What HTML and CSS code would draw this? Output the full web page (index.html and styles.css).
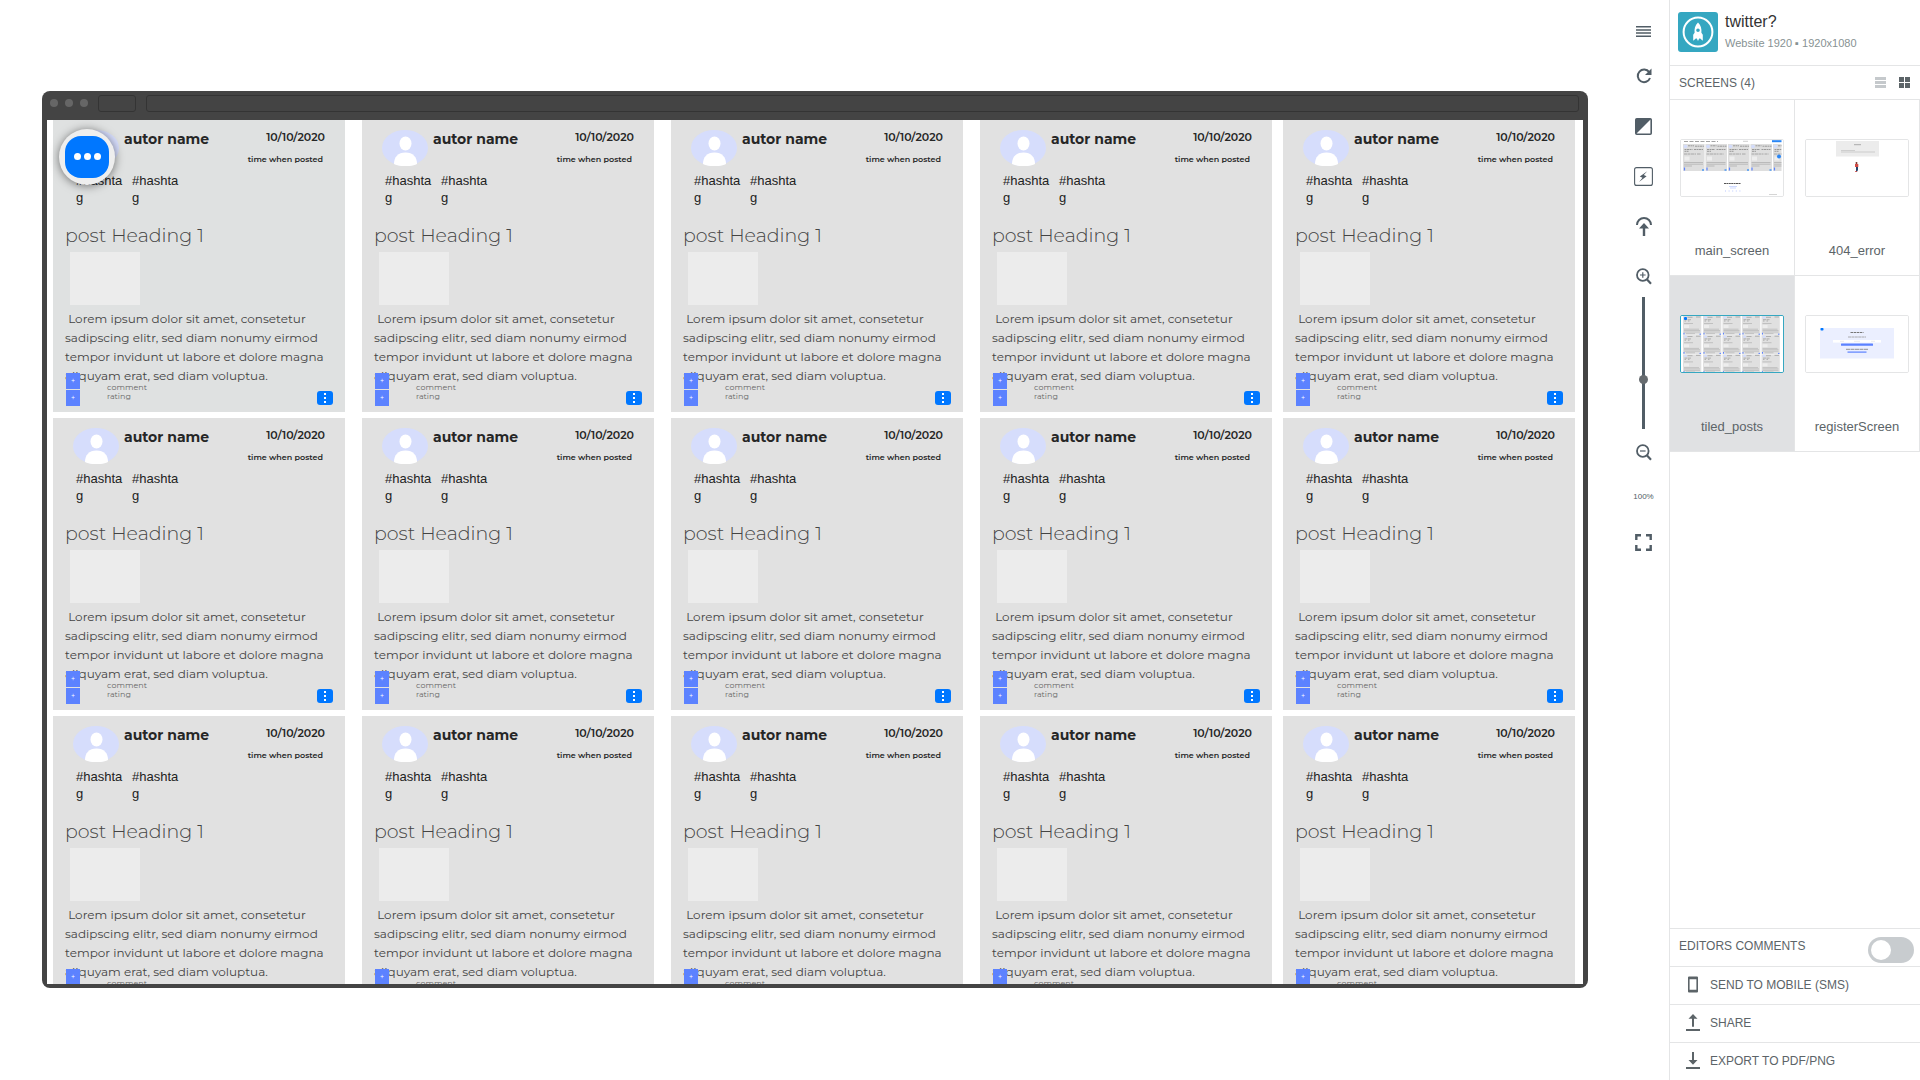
FILE: index.html
```html
<!DOCTYPE html>
<html lang="en">
<head>
<meta charset="utf-8">
<meta name="viewport" content="width=device-width, initial-scale=1">
<title>twitter? - tiled_posts</title>
<link rel="stylesheet" href="styles.css">
</head>
<body>
<div class="app">
  <main class="stage">
    <div class="browser">
      <div class="browser-bar">
        <span class="dot"></span><span class="dot"></span><span class="dot"></span>
        <span class="bar-box bar-nav"></span>
        <span class="bar-box bar-url"></span>
      </div>
      <div class="screen">
        <div class="posts" id="posts"></div>
        <button class="fab" type="button" aria-label="Menu">
          <span class="fab-face"><i></i><i></i><i></i></span>
        </button>
      </div>
    </div>
  </main>

  <nav class="tools" aria-label="Preview tools">
    <button class="tool tool-first" type="button" aria-label="Menu"><svg width="15" height="11" viewBox="0 0 15 11"><path d="M0 0h15v1.500H0zM0 3.200h15v1.500H0zM0 6.300h15v1.500H0zM0 9.500h15v1.500H0z" fill="currentColor"/></svg></button>
    <button class="tool" type="button" aria-label="Reload"><svg width="16" height="16" viewBox="0 0 16 16"><path d="M13.2 4.2A6.3 6.3 0 1 0 14 10" fill="none" stroke="currentColor" stroke-width="2"/><path d="M15.5 0.6v6.4H9z" fill="currentColor"/></svg></button>
    <button class="tool" type="button" aria-label="Contrast"><svg width="17" height="17" viewBox="0 0 17 17"><rect x="0.8" y="0.8" width="15.4" height="15.4" rx="1" fill="none" stroke="currentColor" stroke-width="1.6"/><path d="M1 16V1h15z" fill="currentColor"/></svg></button>
    <button class="tool" type="button" aria-label="Highlight links"><svg width="19" height="19" viewBox="0 0 19 19"><rect x="0.6" y="0.6" width="17.8" height="17.8" rx="2" fill="none" stroke="currentColor" stroke-width="1.1"/><path d="M13.200 4.200L5.800 9.500l2.700 1.200-3.500 4.200 7.600-5.600-2.800-1.200z" fill="currentColor"/></svg></button>
    <button class="tool" type="button" aria-label="Upload"><svg width="16" height="19" viewBox="0 0 16 19"><path d="M1 8A7 7 0 0 1 15 8" fill="none" stroke="currentColor" stroke-width="2"/><path d="M8 6l5 5.5H9.2V19H6.8v-7.5H3z" fill="currentColor"/></svg></button>
    <button class="tool" type="button" aria-label="Zoom in"><svg width="16" height="17" viewBox="0 0 16 17"><circle cx="6.8" cy="7" r="5.8" fill="none" stroke="currentColor" stroke-width="1.8"/><path d="M10.8 11.3l4.2 4.4" stroke="currentColor" stroke-width="2.2"/><path d="M4 7h5.6M6.8 4.2v5.6" stroke="currentColor" stroke-width="1.2"/></svg></button>
    <input class="zoom" type="range" min="0" max="100" value="37" aria-label="Zoom">
    <button class="tool tool-low" type="button" aria-label="Zoom out"><svg width="16" height="17" viewBox="0 0 16 17"><circle cx="6.8" cy="7" r="5.8" fill="none" stroke="currentColor" stroke-width="1.8"/><path d="M10.8 11.3l4.2 4.4" stroke="currentColor" stroke-width="2.2"/><path d="M4 7h5.6" stroke="currentColor" stroke-width="1.2"/></svg></button>
    <button class="tool tool-text" type="button">100%</button>
    <button class="tool tool-low" type="button" aria-label="Full screen"><svg width="17" height="17" viewBox="0 0 17 17"><path d="M1.3 6V1.3H6M11 1.3h4.7V6M15.7 11v4.7H11M6 15.7H1.3V11" fill="none" stroke="currentColor" stroke-width="2.4"/></svg></button>
  </nav>

  <aside class="side">
    <header class="project">
      <svg class="logo" width="40" height="40" viewBox="0 0 40 40"><rect width="40" height="40" rx="3" fill="#35a7c1"/><circle cx="20" cy="20" r="14.4" fill="none" stroke="#fff" stroke-width="2"/><path fill="#fff" fill-rule="evenodd" d="M20 10.5c3 2.8 3.8 6.500 3.400 10.300l1.400 2v6l-2.600-2.400h-1l-1.200 2.600-1.200-2.600h-1l-2.600 2.400v-6l1.400-2c-.4-3.800.4-7.500 3.400-10.300zM20 16.500a1.800 1.800 0 1 0 0 3.600 1.800 1.800 0 0 0 0-3.600z"/></svg>
      <div>
        <h1>twitter?</h1>
        <p>Website 1920 ▪ 1920x1080</p>
      </div>
    </header>
    <div class="screens-head">
      <h2>SCREENS (4)</h2>
      <button class="view view-off" type="button" aria-label="List view"><svg width="11" height="11" viewBox="0 0 11 11"><path d="M0 0h11v3H0zM0 4h11v3H0zM0 8h11v3H0z" fill="currentColor"/></svg></button>
      <button class="view" type="button" aria-label="Grid view"><svg width="11" height="11" viewBox="0 0 11 11"><path d="M0 0h5v5H0zM6 0h5v5H6zM0 6h5v5H0zM6 6h5v5H6z" fill="currentColor"/></svg></button>
    </div>
    <div class="thumbs">
      <a class="thumb" href="#main_screen">
        <svg viewBox="0 0 102 56">
          <defs>
            <g id="mini-post">
              <rect width="21.5" height="27" fill="#dedede"/>
              <ellipse cx="2.500" cy="2.500" rx="1.900" ry="1.800" fill="#d3dcfb"/>
              <path d="M5 1.800h6M12 2.200h9M1.500 5.500h8M11 5.500h9M1.500 7.300h4" stroke="#888" stroke-width="0.8" stroke-dasharray="2 .5"/>
              <path d="M1 10h12M14 10h4" stroke="#999" stroke-width="0.8" stroke-dasharray="3 .5"/>
              <rect x="1.500" y="12.500" width="5" height="4" fill="#eee"/>
              <path d="M1 18.500h19M1 20.200h19M1 22h8" stroke="#aaa" stroke-width="0.7"/>
              <path d="M1.500 23.500v3" stroke="#5c82ff" stroke-width="1.200"/>
              <path d="M19 26h2" stroke="#0077ff" stroke-width="1.200"/>
            </g>
            <g id="mini-tile">
              <rect width="18.300" height="18.700" fill="#e0e0e0"/>
              <ellipse cx="2.500" cy="1.500" rx="1.500" ry="1.200" fill="#d3dcfb"/>
              <path d="M4.500 1.300h5M13 1h4.500M1.500 3.700h3M5 3.700h3M1.500 5h1.500M5 5h1.500" stroke="#999" stroke-width="0.7"/>
              <path d="M1 7.500h9" stroke="#aaa" stroke-width="0.6"/>
              <rect x="1" y="9" width="5" height="3" fill="#ededed"/>
              <path d="M1 13.200h15M1 14.500h16M1 16h16M3 17.600h9" stroke="#b4b4b4" stroke-width="0.7"/>
              <path d="M1 16.800v1.700M16.500 18.200h1.500" stroke="#5c82ff" stroke-width="1"/>
            </g>
          </defs>
          <rect width="102" height="56" fill="#fff"/>
          <path d="M3 1.500h34" stroke="#999" stroke-width="0.9" stroke-dasharray="4 1.500"/>
          <path d="M62 1.300h5" stroke="#bbb" stroke-width="0.7"/>
          <rect x="91" y="0.200" width="9.500" height="2" fill="#2a86f5"/>
          <svg class="mini-strip" x="2" y="4" width="98.500" height="27"><use href="#mini-post"/><use href="#mini-post" x="22.500"/><use href="#mini-post" x="45"/><use href="#mini-post" x="67.500"/><use href="#mini-post" x="90"/></svg>
          <circle cx="98" cy="16.500" r="2" fill="#2a86f5"/>
          <path d="M43 43.500h17" stroke="#555" stroke-width="1" stroke-dasharray="2 .4"/>
          <path d="M48 46.500h8M49 48h6" stroke="#b9c8ff" stroke-width="0.700"/>
          <path d="M44 51h16" stroke="#b9c8ff" stroke-width="1.200" stroke-dasharray="1 2.600"/>
          <path d="M88 54.500h8" stroke="#aaa" stroke-width="0.500"/>
        </svg>
        <span>main_screen</span>
      </a>
      <a class="thumb" href="#404_error">
        <svg viewBox="0 0 102 56">
          <rect width="102" height="56" fill="#fff"/>
          <rect x="30" y="1" width="43" height="15.500" fill="#ececec"/>
          <path d="M48 4.700h7" stroke="#999" stroke-width="0.800"/>
          <path d="M35 10.500h14M35 12h34" stroke="#bbb" stroke-width="0.600"/>
          <circle cx="50.500" cy="23" r="1" fill="#7a2a20"/>
          <path d="M49 24h3.300v3H49z" fill="#d34a45"/>
          <path d="M50 27h2v3l-1 1.800h-1z" fill="#26436b"/>
          <path d="M49 31.500h2" stroke="#d34a45" stroke-width="0.800"/>
        </svg>
        <span>404_error</span>
      </a>
      <a class="thumb thumb-on" href="#tiled_posts" aria-current="page">
        <svg viewBox="0 0 102 56">
          <rect width="102" height="56" fill="#fff"/>
          <g id="mini-row"><use href="#mini-tile" x="2"/><use href="#mini-tile" x="22"/><use href="#mini-tile" x="41.500"/><use href="#mini-tile" x="61"/><use href="#mini-tile" x="80.500"/></g>
          <use href="#mini-row" y="19.200"/><use href="#mini-row" y="38.400"/>
          <rect x="3" y="1" width="3" height="3" rx="1" fill="#0077ff"/>
        </svg>
        <span>tiled_posts</span>
      </a>
      <a class="thumb" href="#registerScreen">
        <svg viewBox="0 0 102 56">
          <rect width="102" height="56" fill="#fff"/>
          <rect x="14" y="12" width="74" height="30.500" fill="#ebefff"/>
          <rect x="14.500" y="12" width="3" height="2.600" rx="0.800" fill="#0077ff"/>
          <path d="M44.500 16.500h13" stroke="#777" stroke-width="1.100" stroke-dasharray="2.500 .6"/>
          <path d="M42 21h18" stroke="#999" stroke-width="0.800" stroke-dasharray="3 .4"/>
          <rect x="27" y="24" width="48" height="2.600" fill="#fff"/>
          <path d="M34 25.300h4M48 25.300h6M65 25.300h4" stroke="#ddd" stroke-width="0.600"/>
          <rect x="35" y="27.600" width="32" height="2.200" rx="0.500" fill="#5c82ff"/>
          <path d="M40 33.300h22" stroke="#888" stroke-width="0.900" stroke-dasharray="4 .5"/>
          <rect x="41.500" y="35.500" width="19" height="1.200" fill="#5c82ff"/>
        </svg>
        <span>registerScreen</span>
      </a>
    </div>
    <div class="side-foot">
      <label class="foot-row foot-switch"><span>EDITORS COMMENTS</span><input type="checkbox" class="switch"></label>
      <button class="foot-row" type="button"><svg width="14" height="17" viewBox="0 0 14 17"><path d="M3 0.500h8a1 1 0 0 1 1 1v14a1 1 0 0 1-1 1H3a1 1 0 0 1-1-1v-14a1 1 0 0 1 1-1zM3.600 3.200v10.600h6.800V3.200z" fill="currentColor" fill-rule="evenodd"/></svg>SEND TO MOBILE (SMS)</button>
      <button class="foot-row" type="button"><svg width="14" height="17" viewBox="0 0 14 17"><path d="M7 0l4.500 4.800H8v8H6v-8H2.500zM0 15h14v2H0z" fill="currentColor"/></svg>SHARE</button>
      <button class="foot-row" type="button"><svg width="14" height="17" viewBox="0 0 14 17"><path d="M7 12.800l4.500-4.800H8V0H6v8H2.500zM0 15h14v2H0z" fill="currentColor"/></svg>EXPORT TO PDF/PNG</button>
    </div>
  </aside>
</div>

<template id="post">
  <article class="post">
    <header class="post-head">
      <svg class="avatar" width="46" height="36" viewBox="0 0 46 36"><ellipse cx="23" cy="18" rx="23" ry="18" fill="#d6ddfc"/><ellipse cx="23.500" cy="13.500" rx="6" ry="7" fill="#fff"/><path d="M12 34c0-7 4-11.500 11.500-11.500S35 27 35 34c-6 3-17 3-23 0z" fill="#fff"/></svg>
      <h3>autor name</h3>
      <div class="when"><time>10/10/2020</time><span>time when posted</span></div>
    </header>
    <div class="tags"><span>#hashtag</span><span>#hashtag</span></div>
    <h2>post Heading 1</h2>
    <div class="picture"></div>
    <p>&nbsp;Lorem ipsum dolor sit amet, consetetur<br>sadipscing elitr, sed diam nonumy eirmod<br>tempor invidunt ut labore et dolore magna<br>aliquyam erat, sed diam voluptua.</p>
    <footer class="post-foot">
      <div class="votes"><button type="button">+</button><button type="button">+</button></div>
      <span class="rating">comment<br>rating</span>
      <button class="more" type="button" aria-label="More"><i></i><i></i><i></i></button>
    </footer>
  </article>
</template>
<script src="script.js"></script>
</body>
</html>
```
FILE: styles.css
```css
* { box-sizing: border-box; }

body {
  margin: 0;
  background: #fff;
  color: #5c6468;
  font: 12px/16px "Liberation Sans", Arial, sans-serif;
}

button {
  padding: 0;
  border: 0;
  background: none;
  color: inherit;
  font: inherit;
  cursor: pointer;
}

h1, h2, h3, p { margin: 0; font-weight: 400; }
svg { display: block; flex: none; }

.app { display: flex; min-height: 100vh; }

/* Preview stage */
.stage {
  flex: 1;
  min-width: 0;
  display: flex;
  align-items: center;
  padding: 0 28px 2px 42px;
}

.browser {
  flex: 1;
  min-width: 0;
  padding: 0 5px 4px;
  border-radius: 8px;
  background: #444;
}

.browser-bar {
  display: flex;
  align-items: center;
  height: 29px;
  padding: 0 4px 4px 3px;
}

.dot {
  width: 8px;
  height: 8px;
  margin-right: 7px;
  border-radius: 50%;
  background: #666;
}

.bar-box {
  height: 17px;
  border: 1px solid #343434;
  border-radius: 3px;
}
.bar-nav { width: 38px; margin: 0 10px 0 3px; }
.bar-url { flex: 1; }

.screen {
  position: relative;
  aspect-ratio: 16 / 9;
  overflow: hidden;
  background: #fff;
}

.posts {
  display: flex;
  flex-direction: column;
  gap: 6px;
  padding: 0 8px 0 6px;
}

.row { display: flex; gap: 17px; }

.post {
  flex: 1;
  min-width: 0;
  padding: 10px 12px 6px;
  background: #e1e1e1;
  color: #444;
  font-family: Montserrat, Inter, sans-serif;
}
.post:last-child { margin-left: -6px; }
.row:first-child .post:first-child { background: #dfe1e1; }

.post-head {
  display: flex;
  gap: 5px;
  padding: 0 8px;
}

.post-head h3 {
  flex: 1;
  font-size: 14px;
  line-height: 18px;
  font-weight: 700;
  color: #262626;
  white-space: nowrap;
}

.when {
  display: flex;
  flex-direction: column;
  align-items: flex-end;
  gap: 8px;
  color: #262626;
  font-size: 8px;
  line-height: 14px;
  font-weight: 600;
  white-space: nowrap;
}
.when time { font-size: 11px; }
.when span { padding-right: 2px; }

.tags {
  display: flex;
  gap: 9px;
  padding: 6px 11px 0;
  color: #222;
  font: 13px/17px "Liberation Sans", Arial, sans-serif;
}
.tags span { width: 47px; word-break: break-all; }

.post h2 {
  margin-top: 18px;
  font-size: 19px;
  line-height: 24px;
  font-weight: 300;
}

.picture {
  width: 70px;
  height: 53px;
  margin: 4px 0 4px 5px;
  background: #ececec;
}

.post p {
  font-size: 12px;
  line-height: 19px;
  white-space: nowrap;
}

.post-foot {
  position: relative;
  display: flex;
  align-items: flex-end;
  margin-top: -12px;
}

.votes { display: grid; gap: 1px; margin-left: 1px; }
.votes button {
  width: 14px;
  height: 16px;
  background: #5c82ff;
  color: #fff;
  font-size: 7px;
  line-height: 16px;
}

.rating {
  flex: 1;
  margin-left: 27px;
  padding-bottom: 5px;
  color: #666;
  font-size: 8px;
  line-height: 9px;
}

.more {
  display: flex;
  flex-direction: column;
  align-items: center;
  justify-content: center;
  gap: 2px;
  width: 16px;
  height: 14px;
  margin-bottom: 1px;
  border-radius: 3px;
  background: #0077ff;
}
.more i { width: 2px; height: 2px; background: #fff; }

/* Floating menu button over the posts */
.fab {
  position: absolute;
  left: 12px;
  top: 9px;
  display: grid;
  place-items: center;
  width: 56px;
  height: 56px;
  border-radius: 50%;
  background: #eee;
  box-shadow: 0 1px 10px rgba(0, 0, 0, .5);
}

.fab-face {
  display: flex;
  align-items: center;
  justify-content: center;
  gap: 3px;
  width: 44px;
  height: 42px;
  border-radius: 16px;
  background: #0077ff;
}
.fab-face i { width: 7px; height: 7px; border-radius: 50%; background: #fff; }

/* Tool strip */
.tools {
  display: flex;
  flex-direction: column;
  align-items: center;
  width: 53px;
  padding: 11px 0 0 2px;
  color: #515d66;
}

.tool { display: grid; place-items: center; width: 30px; height: 50px; }
.tool-first { height: 40px; }
.tool-low { height: 46px; }
.tool-text { height: 44px; font-size: 8px; }

.zoom {
  appearance: none;
  writing-mode: vertical-lr;
  direction: rtl;
  width: 9px;
  height: 132px;
  margin: -4px 0 0;
  background: linear-gradient(#515d66, #515d66) center / 3px 100% no-repeat;
}
.zoom::-webkit-slider-thumb {
  appearance: none;
  width: 9px;
  height: 9px;
  border-radius: 50%;
  background: #666b6f;
}

/* Sidebar */
.side {
  display: flex;
  flex-direction: column;
  width: 251px;
  border-left: 1px solid #e4e5e6;
}

.project {
  display: flex;
  gap: 7px;
  height: 66px;
  padding: 12px 8px 0;
  border-bottom: 1px solid #e4e5e6;
}
.project h1 { color: #333; font-size: 16px; line-height: 20px; }
.project p { padding-top: 3px; color: #879293; font-size: 11px; }

.screens-head {
  display: flex;
  align-items: center;
  gap: 13px;
  height: 34px;
  padding: 0 10px 0 9px;
  border-bottom: 1px solid #e4e5e6;
}
.screens-head h2 { flex: 1; font-size: 12px; }
.view-off { color: #c5c9cc; }

.thumbs { display: grid; grid-template-columns: 1fr 1fr; }

.thumb {
  display: flex;
  flex-direction: column;
  align-items: center;
  gap: 46px;
  height: 176px;
  padding-top: 39px;
  border-right: 1px solid #e4e5e6;
  border-bottom: 1px solid #e4e5e6;
  color: inherit;
  font-size: 13px;
  text-decoration: none;
}
.thumb > svg { width: 104px; height: 58px; border: 1px solid #e4e5e6; border-radius: 2px; }
.thumb-on { background: #e0e1e3; }
.thumb-on > svg { border-color: #35a7c1; }

.side-foot { margin-top: auto; }

.foot-row {
  display: flex;
  align-items: center;
  gap: 10px;
  width: 100%;
  height: 38px;
  padding: 0 6px 2px 16px;
  border-top: 1px solid #e4e5e6;
}
.foot-switch { justify-content: space-between; padding: 0 6px 0 9px; }
.foot-switch span { padding-bottom: 3px; }

.switch {
  appearance: none;
  display: flex;
  align-items: center;
  width: 46px;
  height: 26px;
  margin: 4px 0 0;
  padding: 3px;
  border-radius: 13px;
  background: #c8cccf;
}
.switch::before {
  content: "";
  width: 20px;
  height: 20px;
  border-radius: 50%;
  background: #fff;
}
.switch:checked { justify-content: flex-end; background: #35a7c1; }
```
FILE: script.js
```js
const ROWS = 3;
const COLUMNS = 5;

const posts = document.getElementById("posts");
const template = document.getElementById("post");

for (let r = 0; r < ROWS; r++) {
  const row = document.createElement("div");
  row.className = "row";
  for (let c = 0; c < COLUMNS; c++) {
    row.append(template.content.cloneNode(true));
  }
  posts.append(row);
}
```
